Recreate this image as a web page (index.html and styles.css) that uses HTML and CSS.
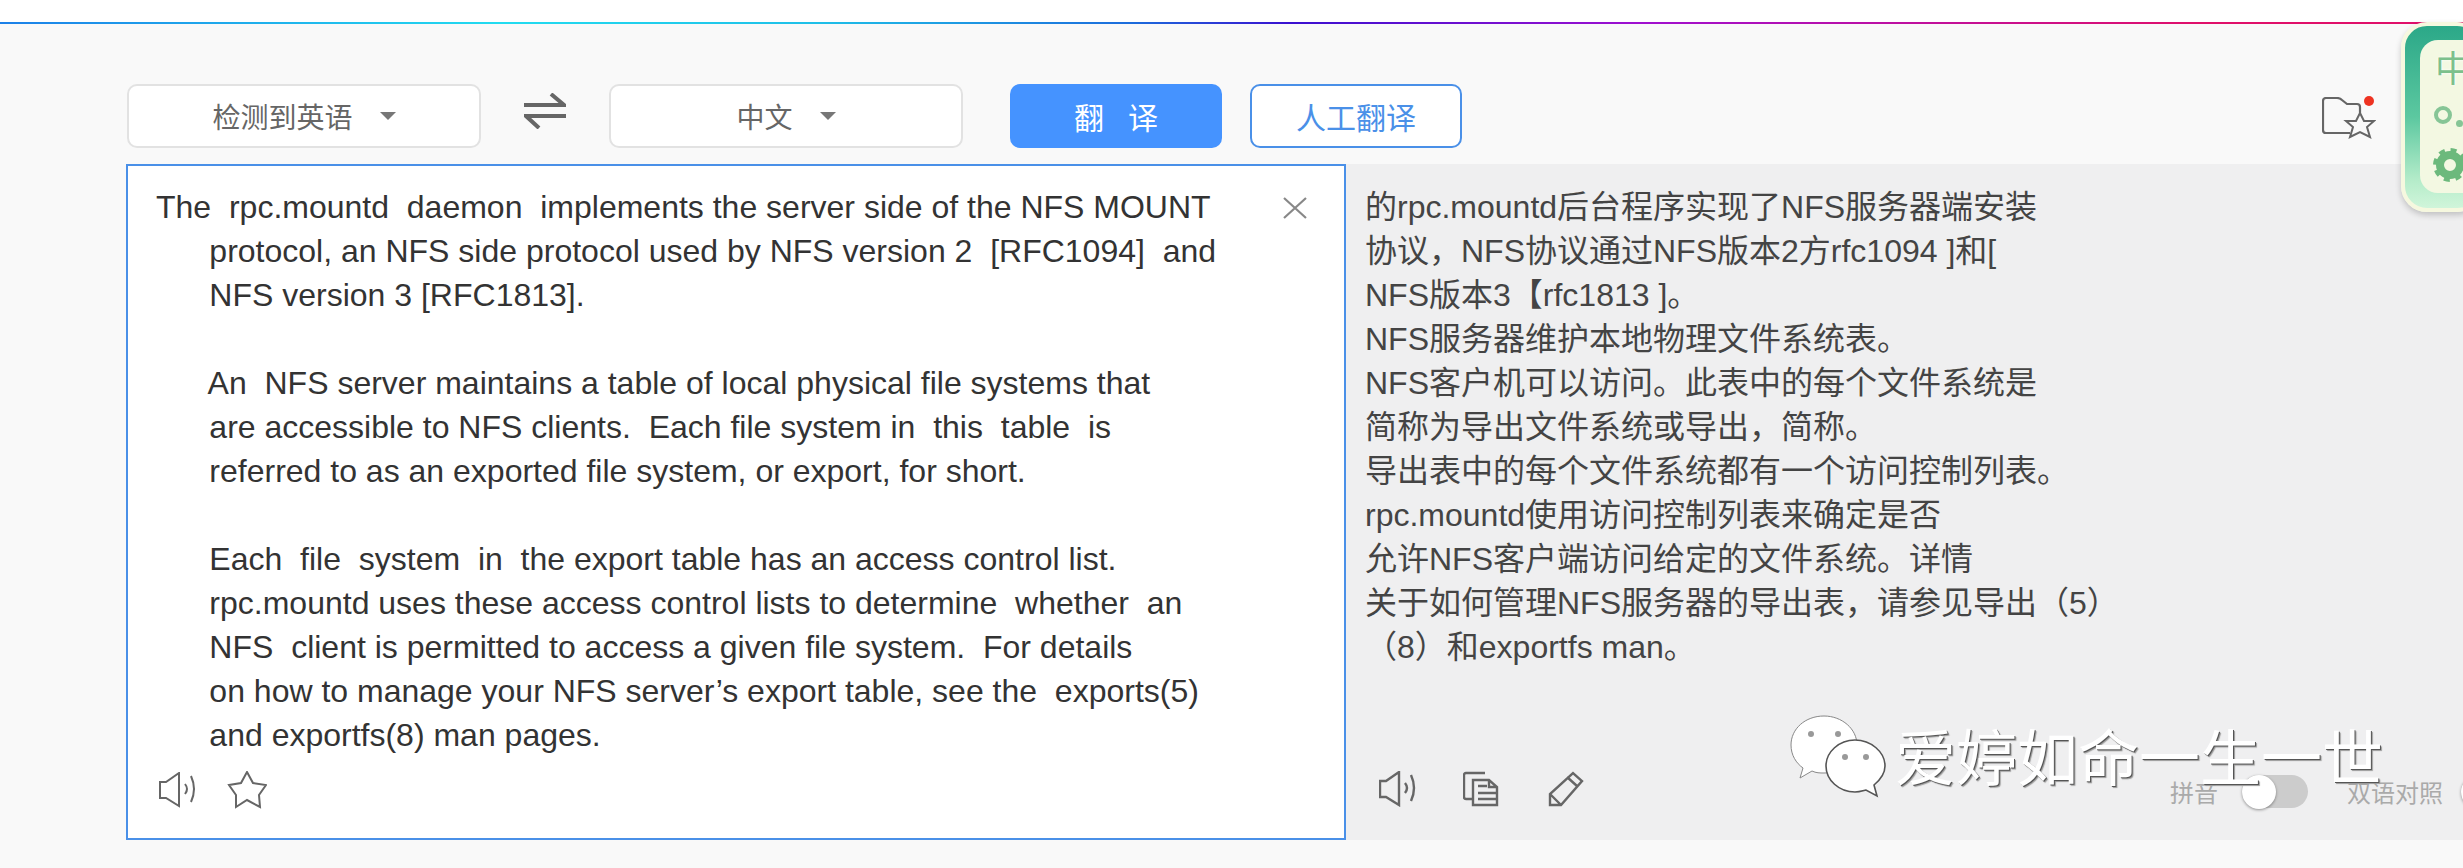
FILE: index.html
```html
<!DOCTYPE html>
<html lang="zh-CN">

<head>
    <title>翻译</title>
    <link rel="stylesheet" href="styles.css">
</head>

<body>
    <div class="top-line"></div>
    <div class="main-div">
        <div class="toolbar">
            <div class="select">检测到英语<span class="caret"></span></div>
            <svg class="swap" width="42" height="36" viewBox="0 0 42 36">
                <path d="M0 12H40L27 1M42 23H2L15 35" fill="none" stroke="#666" stroke-width="4"/>
            </svg>
            <div class="select">中文<span class="caret"></span></div>
            <div class="button primary"><span>翻</span><span>译</span></div>
            <div class="button outline">人工翻译</div>
            <div class="collect">
                <svg width="54" height="42" viewBox="0 0 54 42">
                    <path d="M28 36H4Q1 36 1 33V4Q1 1 4 1H15Q18 1 20 3L25 7H35Q38 7 38 10V16" fill="none" stroke="#666" stroke-width="2.2"/>
                    <path d="M38 16L42 24H52L45 30L48 40L38 35L28 40L31 30L24 24H34Z" fill="#f9f9f9" stroke="#666" stroke-width="2"/>
                </svg>
                <span class="dot"></span>
            </div>
        </div>
        <div class="panels">
            <div class="panel source">
<p class="text">The  rpc.mountd  daemon  implements the server side of the NFS MOUNT
      protocol, an NFS side protocol used by NFS version 2  [RFC1094]  and
      NFS version 3 [RFC1813].

      An  NFS server maintains a table of local physical file systems that
      are accessible to NFS clients.  Each file system in  this  table  is
      referred to as an exported file system, or export, for short.

      Each  file  system  in  the export table has an access control list.
      rpc.mountd uses these access control lists to determine  whether  an
      NFS  client is permitted to access a given file system.  For details
      on how to manage your NFS server’s export table, see the  exports(5)
      and exportfs(8) man pages.</p>
                <svg class="close" width="24" height="22" viewBox="0 0 24 22">
                    <path d="M1 1L23 21M23 1L1 21" stroke="#888" stroke-width="2.2"/>
                </svg>
                <div class="icons">
                    <svg width="40" height="36" viewBox="0 0 40 36">
                        <path d="M1 10H7L20 1V34L7 26H1Z" fill="none" stroke="#666" stroke-width="2"/>
                        <path d="M26 12Q30 17 26 22M32 4Q38 17 32 30" fill="none" stroke="#666" stroke-width="2"/>
                    </svg>
                    <svg width="40" height="38" viewBox="0 0 40 38">
                        <path d="M20 1L26 12L39 14L32 24L33 36L20 29L9 36L9 24L2 14L14 12Z" fill="none" stroke="#666" stroke-width="2"/>
                    </svg>
                </div>
            </div>
            <div class="panel result">
                <p class="line">的rpc.mountd后台程序实现了NFS服务器端安装</p>
                <p class="line">协议，NFS协议通过NFS版本2方rfc1094 ]和[</p>
                <p class="line">NFS版本3【rfc1813 ]。</p>
                <p class="line">NFS服务器维护本地物理文件系统表。</p>
                <p class="line">NFS客户机可以访问。此表中的每个文件系统是</p>
                <p class="line">简称为导出文件系统或导出，简称。</p>
                <p class="line">导出表中的每个文件系统都有一个访问控制列表。</p>
                <p class="line">rpc.mountd使用访问控制列表来确定是否</p>
                <p class="line">允许NFS客户端访问给定的文件系统。详情</p>
                <p class="line">关于如何管理NFS服务器的导出表，请参见导出（5）</p>
                <p class="line">（8）和exportfs man。</p>
                <div class="icons result-icons">
                    <svg width="40" height="36" viewBox="0 0 40 36">
                        <path d="M1 10H7L20 1V34L7 26H1Z" fill="none" stroke="#666" stroke-width="2.4"/>
                        <path d="M26 12Q30 17 26 22M32 4Q38 17 32 30" fill="none" stroke="#666" stroke-width="2.4"/>
                    </svg>
                    <svg width="36" height="36" viewBox="0 0 36 36">
                        <path d="M22 2H3Q1 2 1 4V26Q1 28 3 28H9" fill="none" stroke="#666" stroke-width="2.4"/>
                        <path d="M10 9H26L34 16V34H10ZM26 9V16H34M15 15H24M15 22H34M15 28H34" fill="none" stroke="#666" stroke-width="2.4"/>
                    </svg>
                    <svg class="edit" width="36" height="36" viewBox="0 0 36 36">
                        <path d="M2 34V23L25 2L34 10L13 34ZM2 23L13 34M19 6L29 15" fill="none" stroke="#666" stroke-width="2.4"/>
                    </svg>
                </div>
                <div class="switches">
                    <span class="switch-label">拼音</span>
                    <span class="toggle"><span class="knob"></span></span>
                    <span class="switch-label">双语对照</span>
                    <span class="toggle next"><span class="knob"></span></span>
                </div>
            </div>
        </div>
    </div>

    <div class="watermark">
        <svg width="98" height="84" viewBox="0 0 98 84">
            <path d="M34 1C15 1 1 14 1 30C1 40 6 48 13 53L10 63L22 56C26 58 30 58 34 58C52 58 67 46 67 30C67 14 52 1 34 1Z" fill="#fff" stroke="#888" stroke-width="1"/>
            <path d="M65 25C49 25 36 37 36 51C36 65 49 77 65 77C69 77 72 76 76 75L87 81L84 70C90 65 95 58 95 51C95 37 81 25 65 25Z" fill="#fff" stroke="#555" stroke-width="1.6"/>
            <circle cx="21" cy="19" r="3" fill="#999"/><circle cx="48" cy="19" r="3" fill="#999"/>
            <circle cx="55" cy="42" r="3" fill="#999"/><circle cx="76" cy="42" r="3" fill="#999"/>
        </svg>
        <span class="mark-text">爱婷如命一生一世</span>
    </div>

    <div class="widget">
        <div class="widget-inner">
            <span class="widget-han">中</span>
            <span class="widget-o"></span>
            <svg class="widget-gear" width="34" height="34" viewBox="0 0 34 34">
                <circle cx="17" cy="17" r="10" fill="none" stroke="#6cb97c" stroke-width="8"/>
                <circle cx="17" cy="17" r="15" fill="none" stroke="#6cb97c" stroke-width="4" stroke-dasharray="6 5.8"/>
            </svg>
        </div>
    </div>
</body>

</html>
```

FILE: styles.css
```css
html,
body {
    margin: 0;
    padding: 0;
}

body {
    width: 2463px;
    height: 868px;
    overflow: hidden;
    position: relative;
    background-color: #fff;
    font-family: "Liberation Sans", "Noto Sans CJK SC", sans-serif;
}

p {
    margin: 0;
}

.top-line {
    height: 2px;
    margin-top: 22px;
    background: linear-gradient(90deg, #1c80e8 0, #22dcf0 500px, #1fbfe8 820px, #1c6bdc 1134px, #3a10d0 1290px, #a010d0 1640px, #e0106a 2200px);
}

.main-div {
    height: 844px;
    background-color: #f9f9f9;
    padding-top: 60px;
    box-sizing: border-box;
}

.toolbar {
    display: flex;
    align-items: flex-start;
    height: 64px;
    padding-left: 127px;
    margin-bottom: 16px;
}

.select {
    width: 354px;
    height: 64px;
    box-sizing: border-box;
    display: flex;
    align-items: center;
    justify-content: center;
    background-color: #fff;
    border: 2px solid #e2e2e2;
    border-radius: 10px;
    font-size: 28px;
    color: #666;
}

.caret {
    margin-left: 27px;
    border-top: 8px solid #777;
    border-left: 8px solid transparent;
    border-right: 8px solid transparent;
}

.swap {
    margin: 9px 43px 0;
}

.button {
    width: 212px;
    height: 64px;
    box-sizing: border-box;
    display: flex;
    align-items: center;
    justify-content: center;
    border-radius: 10px;
    font-size: 30px;
}

.primary {
    margin-left: 47px;
    gap: 24px;
    background-color: #4593ff;
    color: #fff;
}

.outline {
    margin-left: 28px;
    background-color: #fff;
    border: 2px solid #4a90e8;
    color: #4a90e8;
}

.collect {
    position: relative;
    margin-left: 860px;
    margin-top: 13px;
}

.collect svg {
    display: block;
}

.dot {
    position: absolute;
    left: 42px;
    top: -1px;
    width: 10px;
    height: 10px;
    border-radius: 50%;
    background-color: #ee3322;
}

.panels {
    display: flex;
    height: 676px;
    padding-left: 126px;
}

.panel {
    position: relative;
    box-sizing: border-box;
}

.source {
    width: 1220px;
    background-color: #fff;
    border: 2px solid #4a90e8;
    padding: 19px 0 0 28px;
}

.result {
    flex: 1;
    background-color: #efeff0;
    padding: 21px 0 0 19px;
}

.text {
    white-space: pre;
    font-size: 32px;
    line-height: 44px;
    color: #333;
}

.line {
    font-size: 32px;
    line-height: 44px;
    color: #444;
}

.close {
    position: absolute;
    left: 1155px;
    top: 31px;
}

.icons {
    position: absolute;
    left: 31px;
    top: 605px;
    display: flex;
    align-items: center;
    gap: 28px;
}

.result-icons {
    left: 33px;
    top: 607px;
    gap: 44px;
}

.edit {
    margin-left: 5px;
}

.switches {
    position: absolute;
    left: 824px;
    top: 610px;
    display: flex;
    align-items: center;
    white-space: nowrap;
    font-size: 24px;
    color: #aaa;
}

.toggle {
    flex: none;
    width: 66px;
    height: 33px;
    margin: 0 39px 0 24px;
    position: relative;
    border-radius: 17px;
    background-color: #ccc;
}

.toggle.next {
    margin-right: 0;
    margin-left: 18px;
}

.knob {
    position: absolute;
    left: 0;
    top: 0;
    width: 34px;
    height: 34px;
    border-radius: 50%;
    background-color: #fff;
    box-shadow: 0 1px 3px rgba(0, 0, 0, 0.4);
}

.watermark {
    position: absolute;
    left: 1790px;
    top: 715px;
    display: flex;
    align-items: flex-start;
    gap: 7px;
}

.mark-text {
    font-size: 61px;
    line-height: 84px;
    padding-top: 3px;
    white-space: nowrap;
    color: #fff;
    text-shadow: 1px 1px 0 #555, 2px 2px 1px #999;
}

.widget {
    position: absolute;
    left: 2401px;
    top: 22px;
    width: 82px;
    height: 190px;
    box-sizing: border-box;
    padding: 14px 0 15px 15px;
    border: 4px solid #f6f8df;
    border-radius: 26px;
    background: linear-gradient(180deg, #2ba888, #5cc8a0 50%, #b5ecca 85%, #d0f5da);
    box-shadow: 0 3px 6px rgba(0, 0, 0, 0.2);
}

.widget-inner {
    height: 100%;
    border-radius: 18px 0 0 18px;
    background-color: #f3f8e2;
    display: flex;
    flex-direction: column;
    align-items: flex-start;
    padding: 9px 0 0 15px;
    box-sizing: border-box;
}

.widget-han {
    font-size: 36px;
    line-height: 42px;
    color: #7cc08c;
    text-shadow: 0 0 3px #fff;
}

.widget-o {
    position: relative;
    width: 10px;
    height: 10px;
    margin: 15px 0 0 -1px;
    border: 4px solid #86c596;
    border-radius: 50%;
}

.widget-o::after {
    content: "";
    position: absolute;
    left: 18px;
    top: 10px;
    width: 7px;
    height: 7px;
    border-radius: 50%;
    background-color: #86c596;
}

.widget-gear {
    margin: 24px 0 0 -2px;
}
```
